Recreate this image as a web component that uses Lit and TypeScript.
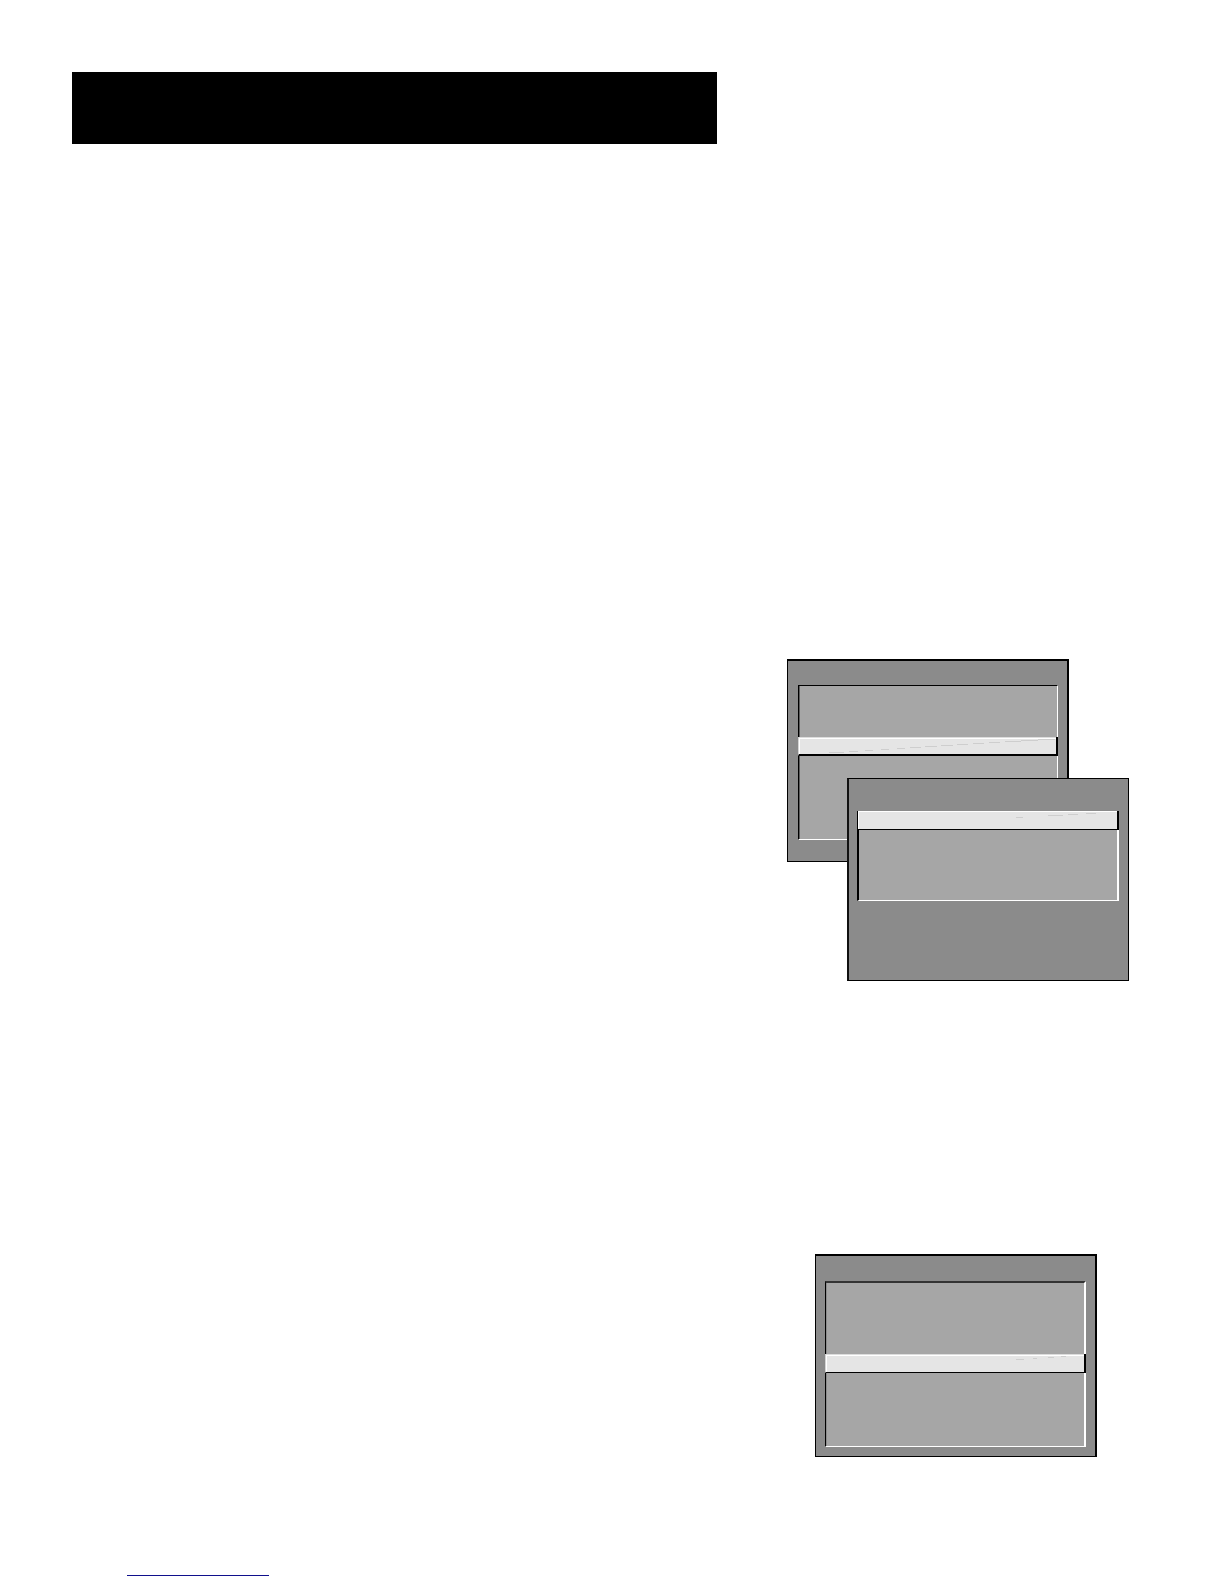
import { LitElement, html, css, svg } from "lit";
import { customElement, property } from "lit/decorators.js";

type Dash = [from: number, to: number, y: number];

const longTrace: Dash[] = [
  [30, 45, 15], [50, 59, 14], [66, 74, 13], [82, 90, 12], [98, 106, 11],
  [111, 122, 10], [126, 138, 9], [142, 154, 8], [158, 169, 7], [174, 185, 6],
  [190, 201, 5], [206, 222, 4], [222, 239, 3], [239, 256, 2],
];
const middleTrace: Dash[] = [[158, 165, 6], [190, 205, 4], [210, 220, 3], [228, 238, 2]];
const shortTrace: Dash[] = [[190, 198, 5], [207, 211, 4], [222, 228, 3], [235, 240, 2]];

/** A framed screen with a sunken panel and one raised row. */
@customElement("menu-screen")
export class MenuScreen extends LitElement {
  @property({ attribute: false }) trace: Dash[] = [];

  static styles = css`
    :host {
      --before: 52px;
      --after: 84px;
      --row: 19px;
      --ledge: 2px;
      --side: 1px;
      --lip: 1px;
      --sunk: 1px;
      --sunk-color: #000;
      --shade: #5c5c5c;
      --row-side: #d4d4d4;
      --row-shine: inset 1px 1px #fff, inset 0 2px #fff;
      display: block;
      box-sizing: border-box;
      background: #8b8b8b;
      border: 1px solid #000;
    }
    .before,
    .row,
    .after {
      box-sizing: border-box;
    }
    .before,
    .after {
      background: #a6a6a6;
      border-left: var(--side) solid #000;
      border-right: var(--lip) solid #fff;
      box-shadow: inset 1px 0 var(--shade);
    }
    .before {
      height: var(--before);
      border-top: var(--sunk) solid var(--sunk-color);
    }
    .after {
      height: var(--after);
      border-bottom: 1px solid #fff;
    }
    .row {
      height: var(--row);
      background: #e5e5e5;
      border-left: 1px solid var(--row-side);
      border-right: 2px solid #000;
      border-bottom: var(--ledge) solid #000;
      box-shadow: var(--row-shine);
      overflow: hidden;
    }
    .trace {
      display: block;
    }
  `;

  render() {
    return html`
      <div class="before"></div>
      <div class="row">
        <svg class="trace" width="257" height="17" aria-hidden="true">
          ${this.trace.map(
            ([from, to, y]) =>
              svg`<rect x=${from} y=${y} width=${to - from} height="1" fill="#cecece" />`
          )}
        </svg>
      </div>
      <div class="after"></div>
    `;
  }
}

@customElement("app-root")
export class AppRoot extends LitElement {
  static styles = css`
    :host {
      display: block;
      background: #fff;
      font-family: "Liberation Sans", Arial, sans-serif;
    }
    .page {
      display: flex;
      flex-direction: column;
      box-sizing: border-box;
      min-height: 100vh;
      padding: 72px 95px 8px 72px;
    }
    .banner {
      width: 61%;
      height: 72px;
      background: #000;
    }
    .figures {
      display: flex;
      flex-direction: column;
      align-items: flex-end;
      gap: 273px;
      margin-top: 515px;
    }
    .stack {
      display: grid;
      grid-template-columns: 60px 222px 60px;
      grid-template-rows: 119px 84px 119px;
    }
    .back {
      grid-area: 1 / 1 / 3 / 3;
      border-width: 2px 2px 1px 1px;
      padding: 24px 9px 21px 10px;
      --row-shine: inset 0 1px #dcdcdc, inset 1px 2px #fff;
    }
    .front {
      grid-area: 2 / 2 / 4 / 4;
      border-left: 2px solid #111;
      padding: 32px 9px 79px 8px;
      --before: 0px;
      --after: 71px;
      --ledge: 1px;
      --side: 2px;
      --lip: 2px;
      --sunk: 0px;
      --shade: #a6a6a6;
      --row-side: #000;
      --row-shine: inset 1px 1px #fff;
    }
    .single {
      width: 282px;
      margin-right: 32px;
      border-width: 2px 2px 1px 1px;
      padding: 25px 9px 9px 9px;
      --before: 73px;
      --after: 74px;
      --ledge: 1px;
      --sunk: 2px;
      --lip: 2px;
      --sunk-color: #333;
      --shade: #8b8b8b;
      --row-shine: inset 0 1px #dcdcdc, inset 1px 2px #fff;
    }
    .link {
      width: 142px;
      height: 1px;
      margin: auto 0 0 55px;
      background: #10108c;
    }
  `;

  render() {
    return html`
      <main class="page">
        <header class="banner"></header>
        <section class="figures">
          <div class="stack">
            <menu-screen class="back" .trace=${longTrace}></menu-screen>
            <menu-screen class="front" .trace=${middleTrace}></menu-screen>
          </div>
          <menu-screen class="single" .trace=${shortTrace}></menu-screen>
        </section>
        <a class="link" href="#" aria-label="Link"></a>
      </main>
    `;
  }
}
